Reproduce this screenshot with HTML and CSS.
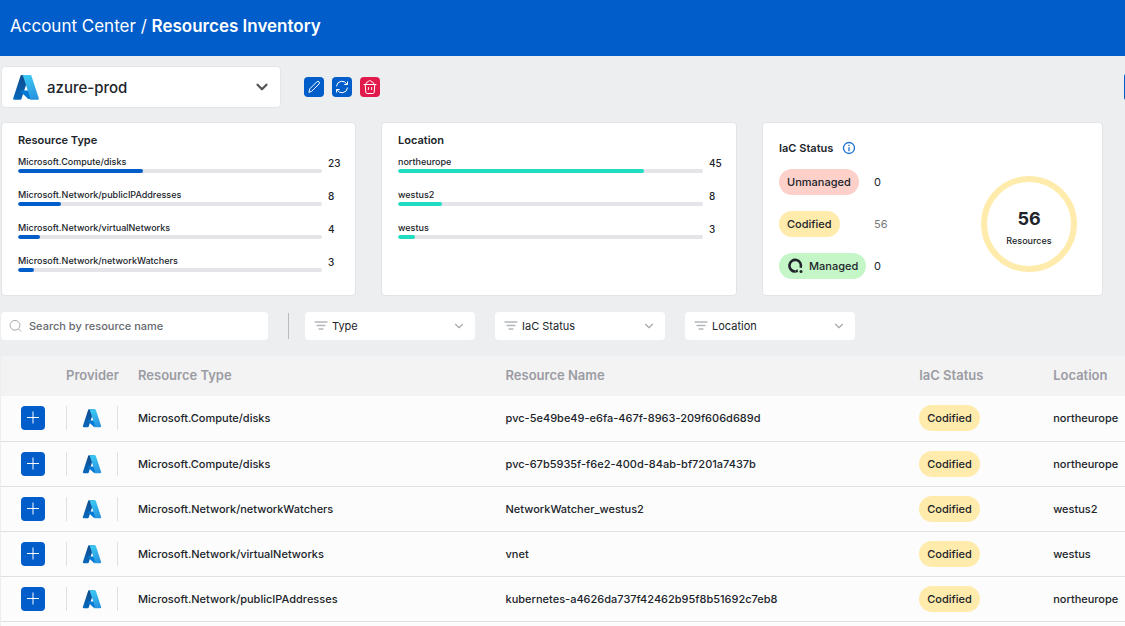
FILE: index.html
```
<!DOCTYPE html>
<html lang="en">
<head>
<meta charset="utf-8">
<title>Account Center / Resources Inventory</title>
<meta name="viewport" content="width=device-width, initial-scale=1">
<link rel="stylesheet" href="styles.css">
</head>
<body>
<svg class="sprite" aria-hidden="true">
  <defs>
    <linearGradient id="az-left" x1="46" y1="7" x2="17" y2="92" gradientUnits="userSpaceOnUse"><stop offset="0" stop-color="#114a8b"/><stop offset="1" stop-color="#0669bc"/></linearGradient>
    <linearGradient id="az-right" x1="46" y1="5" x2="78" y2="91" gradientUnits="userSpaceOnUse"><stop offset="0" stop-color="#3ccbf4"/><stop offset="1" stop-color="#2892df"/></linearGradient>
    <symbol id="azure" viewBox="0 0 96 96">
      <path fill="url(#az-left)" d="M33.3 6.5h26.100L32.300 89a4.200 4.200 0 0 1-4 2.800H8.100a4.200 4.200 0 0 1-3.900-5.500L29.400 9.400a4.200 4.200 0 0 1 3.900-2.900z"/>
      <path fill="#0078d4" d="M71.200 60.300H29.900a1.900 1.900 0 0 0-1.300 3.300l26.500 24.800a4.200 4.200 0 0 0 2.900 1.100h23.400z"/>
      <path fill="url(#az-right)" d="M66.600 9.400a4.200 4.200 0 0 0-4-2.900H33.500a4.200 4.200 0 0 1 4 2.900l25.200 76.900a4.200 4.200 0 0 1-4 5.500h29.100a4.200 4.200 0 0 0 4-5.500z"/>
    </symbol>
    <symbol id="chevron" viewBox="0 0 12 12"><path d="M3 4.500l3 3 3-3" fill="none" stroke="currentColor" stroke-linecap="round" stroke-linejoin="round"/></symbol>
    <symbol id="filter" viewBox="0 0 14 12"><path d="M1 2h12M3 5.500h8M5 9h4" fill="none" stroke="currentColor" stroke-width="1.300" stroke-linecap="round"/></symbol>
    <symbol id="plus" viewBox="0 0 24 24"><path d="M6 11.500h12M12 5.500v12" fill="none" stroke="#fff"/></symbol>
  </defs>
</svg>

<header class="topbar">
  <h1 class="crumbs"><a href="#">Account Center</a> / <strong>Resources Inventory</strong></h1>
</header>

<main class="page">
  <div class="toolbar">
    <div class="account">
      <svg class="account-logo" aria-hidden="true"><use href="#azure"/></svg>
      <select class="account-select" aria-label="Account"><option>azure-prod</option></select>
      <svg class="account-chevron" aria-hidden="true"><use href="#chevron"/></svg>
    </div>
    <div class="actions">
      <button class="action" type="button" aria-label="Edit">
        <svg viewBox="0 0 20 20" aria-hidden="true"><path d="M5 15l.8-3.200 7-7a1.500 1.500 0 0 1 2.200 2.200l-7 7z"/></svg>
      </button>
      <button class="action" type="button" aria-label="Refresh">
        <svg viewBox="0 0 20 20" aria-hidden="true"><path d="M4.500 9A5.600 5.600 0 0 1 15 7.200M15.500 11A5.600 5.600 0 0 1 5 12.800M15.500 4.800v2.700h-2.800M4.500 15.200v-2.700h2.800"/></svg>
      </button>
      <button class="action action-danger" type="button" aria-label="Delete">
        <svg viewBox="0 0 20 20" aria-hidden="true"><path d="M4 7.500h12M5.200 7.500l.6 7.800c.1.800.6 1.200 1.300 1.200h5.800c.7 0 1.200-.4 1.300-1.200l.6-7.800M6 7c0-1.500 1-2.200 2-1.900.4-2 3.400-2 3.700 0 1.200-.2 2.200.5 2 1.900M8.400 10.500v2M11.600 10.500v2"/></svg>
      </button>
    </div>
    <button class="primary" type="button" aria-label="Export"></button>
  </div>

  <div class="cards">
    <section class="card">
      <h2 class="card-title">Resource Type</h2>
      <ul class="bars">
        <li class="bar"><div class="bar-main"><span class="bar-label">Microsoft.Compute/disks</span><div class="track"><div class="fill" style="width:41%"></div></div></div><span class="bar-value">23</span></li>
        <li class="bar"><div class="bar-main"><span class="bar-label">Microsoft.Network/publicIPAddresses</span><div class="track"><div class="fill" style="width:14.200%"></div></div></div><span class="bar-value">8</span></li>
        <li class="bar"><div class="bar-main"><span class="bar-label">Microsoft.Network/virtualNetworks</span><div class="track"><div class="fill" style="width:7.200%"></div></div></div><span class="bar-value">4</span></li>
        <li class="bar"><div class="bar-main"><span class="bar-label">Microsoft.Network/networkWatchers</span><div class="track"><div class="fill" style="width:5.300%"></div></div></div><span class="bar-value">3</span></li>
      </ul>
    </section>
    <section class="card">
      <h2 class="card-title">Location</h2>
      <ul class="bars bars-teal">
        <li class="bar"><div class="bar-main"><span class="bar-label">northeurope</span><div class="track"><div class="fill" style="width:80.500%"></div></div></div><span class="bar-value">45</span></li>
        <li class="bar"><div class="bar-main"><span class="bar-label">westus2</span><div class="track"><div class="fill" style="width:14.400%"></div></div></div><span class="bar-value">8</span></li>
        <li class="bar"><div class="bar-main"><span class="bar-label">westus</span><div class="track"><div class="fill" style="width:5.500%"></div></div></div><span class="bar-value">3</span></li>
      </ul>
    </section>
    <section class="card card-status">
      <div class="status">
        <h2 class="card-title status-title">IaC Status
          <svg class="info" viewBox="0 0 14 14" aria-hidden="true"><circle cx="7" cy="7" r="5.500"/><path d="M7 6.200v4M7 3.700v1.200"/></svg>
        </h2>
        <dl class="status-list">
          <dt><span class="pill pill-red">Unmanaged</span></dt><dd>0</dd>
          <dt><span class="pill pill-yellow">Codified</span></dt><dd class="muted">56</dd>
          <dt><span class="pill pill-green"><svg class="managed" viewBox="0 0 16 16" aria-hidden="true"><path d="M8.500 13.500A5.800 5.800 0 1 1 13.600 9.800" fill="none" stroke="#20242a" stroke-width="2.600"/><circle cx="14" cy="13.600" r="1.500" fill="#20242a"/><path d="M8.500 12.200l2-1 .6 2.800-2.600.8z" fill="#20242a"/></svg>Managed</span></dt><dd>0</dd>
        </dl>
      </div>
      <div class="ring"><strong class="ring-value">56</strong><span class="ring-label">Resources</span></div>
    </section>
  </div>

  <form class="filters">
    <div class="search">
      <svg class="search-icon" viewBox="0 0 14 14" aria-hidden="true"><circle cx="6" cy="6.300" r="4.900"/><path d="M9.500 10l2.500 2.500"/></svg>
      <input class="search-input" type="search" placeholder="Search by resource name" aria-label="Search by resource name">
    </div>
    <span class="divider"></span>
    <div class="filter"><svg class="filter-icon" aria-hidden="true"><use href="#filter"/></svg><select class="filter-select" aria-label="Type"><option>Type</option></select><svg class="filter-chevron" aria-hidden="true"><use href="#chevron"/></svg></div>
    <div class="filter"><svg class="filter-icon" aria-hidden="true"><use href="#filter"/></svg><select class="filter-select" aria-label="IaC Status"><option>IaC Status</option></select><svg class="filter-chevron" aria-hidden="true"><use href="#chevron"/></svg></div>
    <div class="filter"><svg class="filter-icon" aria-hidden="true"><use href="#filter"/></svg><select class="filter-select" aria-label="Location"><option>Location</option></select><svg class="filter-chevron" aria-hidden="true"><use href="#chevron"/></svg></div>
  </form>

  <table class="grid">
    <colgroup><col class="c-expand"><col class="c-provider"><col class="c-type"><col class="c-name"><col class="c-status"><col></colgroup>
    <thead>
      <tr><th></th><th class="provider-head">Provider</th><th>Resource Type</th><th>Resource Name</th><th>IaC Status</th><th>Location</th></tr>
    </thead>
    <tbody>
      <tr><td class="expand"><button class="plus" type="button" aria-label="Expand"><svg aria-hidden="true"><use href="#plus"/></svg></button></td><td class="provider"><div class="provider-box"><svg aria-hidden="true"><use href="#azure"/></svg></div></td><td>Microsoft.Compute/disks</td><td>pvc-5e49be49-e6fa-467f-8963-209f606d689d</td><td><span class="pill pill-yellow">Codified</span></td><td>northeurope</td></tr>
      <tr><td class="expand"><button class="plus" type="button" aria-label="Expand"><svg aria-hidden="true"><use href="#plus"/></svg></button></td><td class="provider"><div class="provider-box"><svg aria-hidden="true"><use href="#azure"/></svg></div></td><td>Microsoft.Compute/disks</td><td>pvc-67b5935f-f6e2-400d-84ab-bf7201a7437b</td><td><span class="pill pill-yellow">Codified</span></td><td>northeurope</td></tr>
      <tr><td class="expand"><button class="plus" type="button" aria-label="Expand"><svg aria-hidden="true"><use href="#plus"/></svg></button></td><td class="provider"><div class="provider-box"><svg aria-hidden="true"><use href="#azure"/></svg></div></td><td>Microsoft.Network/networkWatchers</td><td>NetworkWatcher_westus2</td><td><span class="pill pill-yellow">Codified</span></td><td>westus2</td></tr>
      <tr><td class="expand"><button class="plus" type="button" aria-label="Expand"><svg aria-hidden="true"><use href="#plus"/></svg></button></td><td class="provider"><div class="provider-box"><svg aria-hidden="true"><use href="#azure"/></svg></div></td><td>Microsoft.Network/virtualNetworks</td><td>vnet</td><td><span class="pill pill-yellow">Codified</span></td><td>westus</td></tr>
      <tr><td class="expand"><button class="plus" type="button" aria-label="Expand"><svg aria-hidden="true"><use href="#plus"/></svg></button></td><td class="provider"><div class="provider-box"><svg aria-hidden="true"><use href="#azure"/></svg></div></td><td>Microsoft.Network/publicIPAddresses</td><td>kubernetes-a4626da737f42462b95f8b51692c7eb8</td><td><span class="pill pill-yellow">Codified</span></td><td>northeurope</td></tr>
    </tbody>
  </table>
</main>
</body>
</html>
```
FILE: styles.css
```
* { box-sizing: border-box; }
body {
  margin: 0;
  overflow: hidden;
  background: #edeef0;
  color: #20242a;
  font: 500 11px/16px Inter, "Noto Sans", sans-serif;
}
h1, h2, ul, dl, dd { margin: 0; padding: 0; }
button, input, select { font: inherit; color: inherit; border: 0; padding: 0; }
select { appearance: none; background: transparent; }
.sprite { position: absolute; width: 0; height: 0; }

.topbar {
  display: flex;
  align-items: center;
  height: 56px;
  padding: 0 10px 5px;
  background: #005dc9;
  color: #fff;
}
.crumbs { font-size: 17px; line-height: 24px; font-weight: 400; }
.crumbs a { color: inherit; text-decoration: none; }
.crumbs strong { font-weight: 600; }

.page { padding: 10px 0 0 1px; }

.toolbar { display: flex; align-items: center; height: 42px; margin-right: -20px; }
.account {
  display: grid;
  grid-template-columns: 28px 1fr 18px;
  align-items: center;
  column-gap: 7px;
  width: 280px;
  height: 42px;
  padding: 0 9px 0 10px;
  background: #fff;
  border: 1px solid #e4e5e8;
  border-radius: 4px;
}
.account-logo { width: 28px; height: 28px; }
.account-select { grid-area: 1 / 2 / 2 / 4; height: 40px; padding-top: 2px; font-size: 15px; outline: 0; }
.account-chevron { grid-area: 1 / 3; width: 18px; height: 18px; color: #555; stroke-width: 1.5; pointer-events: none; }
.actions { display: flex; gap: 8px; margin-left: 23px; }
.action { width: 20px; height: 20px; border-radius: 4px; background: #005dc9; }
.action svg { display: block; width: 20px; height: 20px; fill: none; stroke: #fff; stroke-linecap: round; stroke-linejoin: round; }
.action-danger { background: #e11a4b; }
.primary { width: 21px; height: 28px; margin-left: auto; background: #005dc9; border-radius: 4px 0 0 4px; }

.cards {
  display: grid;
  grid-template-columns: 355fr 356fr 341fr;
  gap: 25px;
  margin: 14px 22px 0 0;
}
.card { min-height: 174px; padding: 9px 13px 0 16px; background: #fff; border: 1px solid #e2e3e7; border-radius: 4px; }
.card-title { font-size: 11px; line-height: 16px; font-weight: 600; }
.bars { list-style: none; padding-top: 6px; }
.bar { display: flex; gap: 6px; height: 33px; }
.bar-main { flex: 1; }
.bar-label { display: block; font-size: 9px; line-height: 15px; }
.track { height: 4px; background: #e4e4e9; border-radius: 2px; overflow: hidden; }
.fill { height: 4px; background: #005dc9; border-radius: 2px; }
.bars-teal .fill { background: #20dcc0; }
.bar-value { width: 14px; font-size: 10px; line-height: 19px; }

.card-status { display: flex; justify-content: space-between; padding: 15px 25px 0 16px; }
.status-title { display: flex; align-items: center; gap: 9px; line-height: 20px; }
.info { width: 14px; height: 14px; fill: none; stroke: #1b70d0; stroke-width: 1.3; }
.status-list {
  display: grid;
  grid-template-columns: 87px 1fr;
  gap: 16px 8px;
  align-items: center;
  margin-top: 11px;
}
.status-list dt { display: flex; }
.status-list dd { font-weight: 400; }
.status-list .muted { color: #777; }
.pill { display: inline-flex; align-items: center; gap: 6px; height: 26px; padding: 0 8px; border-radius: 13px; vertical-align: middle; }
.pill-red { background: #fdd0c9; }
.pill-yellow { background: #ffebab; }
.pill-green { background: #c5f6c8; }
.managed { width: 16px; height: 16px; }
.ring {
  display: flex;
  flex-direction: column;
  align-items: center;
  justify-content: center;
  gap: 3px;
  width: 96px;
  height: 96px;
  margin-top: 38px;
  padding-top: 6px;
  border: 6px solid #ffebab;
  border-radius: 50%;
}
.ring-value { font-size: 18px; line-height: 24px; font-weight: 700; }
.ring-label { font-size: 9px; line-height: 14px; }

.filters { display: flex; align-items: center; gap: 20px; margin-top: 16px; }
.search {
  display: flex;
  align-items: center;
  gap: 6px;
  width: 267px;
  height: 28px;
  padding: 0 8px;
  background: #fff;
  border-radius: 4px;
}
.search-icon { flex: none; width: 14px; height: 14px; fill: none; stroke: #aaa; }
.search-input { flex: 1; min-width: 0; background: transparent; outline: 0; appearance: none; }
.search-input::placeholder { color: #666a70; opacity: 1; }
.divider { width: 1px; height: 26px; margin-right: -4px; background: #b9bbbf; }
.filter {
  display: grid;
  grid-template-columns: 14px 1fr 14px;
  align-items: center;
  column-gap: 4px;
  width: 170px;
  height: 28px;
  padding: 0 9px;
  background: #fff;
  border-radius: 4px;
}
.filter-icon { width: 14px; height: 12px; color: #b4b6ba; }
.filter-select { grid-area: 1 / 2 / 2 / 4; height: 28px; font-weight: 400; outline: 0; }
.filter-chevron { grid-area: 1 / 3; width: 14px; height: 14px; color: #aaa; pointer-events: none; }

.grid { width: 100%; margin-top: 16px; padding-bottom: 4px; table-layout: fixed; border-collapse: separate; border-spacing: 0; background: #fcfcfc; }
.c-expand { width: 65px; }
.c-provider { width: 52px; }
.c-type { width: 32.7%; }
.c-name { width: 36.8%; }
.c-status { width: 134px; }
.grid th { height: 40px; padding: 0 0 3px 20px; text-align: left; background: #f3f3f4; color: #9b9ca3; font-size: 13px; line-height: 16px; font-weight: 600; white-space: nowrap; }
.grid .provider-head { padding-left: 0; }
.grid td { height: 45px; padding: 0 0 0 20px; border-bottom: 1px solid #dfe0e2; white-space: nowrap; }
.grid tbody tr:first-child td { height: 46px; padding-bottom: 1px; }
.grid .provider { padding: 0; }
.plus { display: block; width: 24px; height: 24px; border-radius: 4px; background: #005dc9; }
.plus svg { display: block; width: 24px; height: 24px; }
.provider-box { display: flex; align-items: center; justify-content: center; height: 24px; border: solid #dfe0e2; border-width: 0 1px; }
.provider-box svg { width: 20px; height: 20px; }
```
